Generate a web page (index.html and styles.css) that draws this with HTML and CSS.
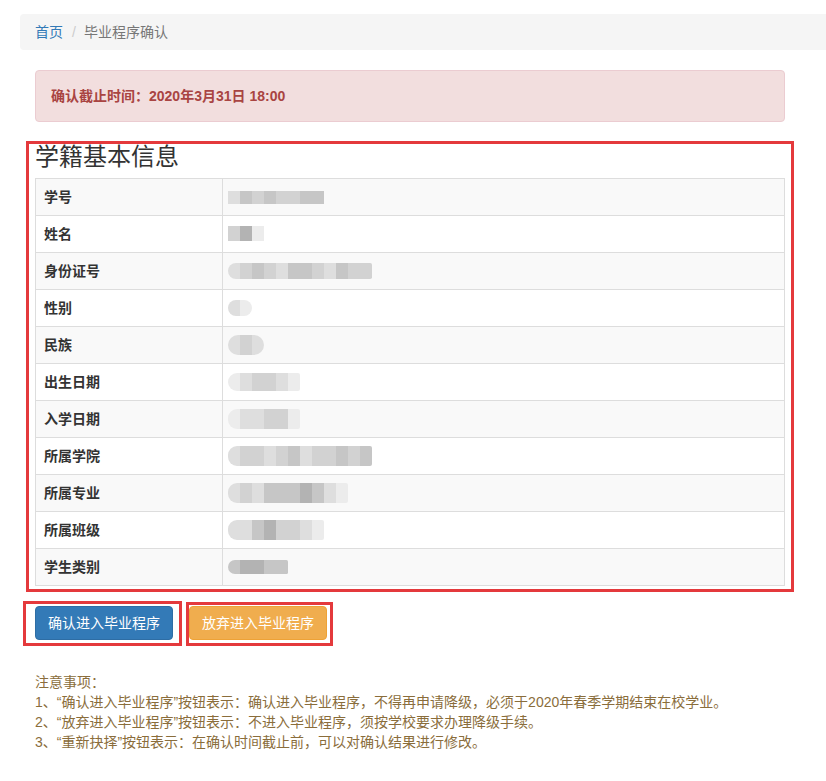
FILE: index.html
```html
<!DOCTYPE html>
<html lang="zh-CN">
<head>
  <meta charset="UTF-8">
  <meta name="viewport" content="width=device-width, initial-scale=1.0">
  <title>毕业程序确认</title>
  <link rel="stylesheet" href="styles.css">
</head>
<body>
  <ol class="breadcrumb">
    <li><a href="#">首页</a></li>
    <li class="active">毕业程序确认</li>
  </ol>

  <div class="main">
    <div class="alert">确认截止时间：2020年3月31日 18:00</div>

    <div class="mark">
      <h3>学籍基本信息</h3>
      <table class="info-table">
        <tbody>
          <tr>
            <th>学号</th>
            <td><span class="blur h13"><i class="g1"></i><i class="g3"></i><i class="g2"></i><i class="g3"></i><i class="g2"></i><i class="g2"></i><i class="g3"></i><i class="g3"></i></span></td>
          </tr>
          <tr>
            <th>姓名</th>
            <td><span class="blur h15"><i class="g2"></i><i class="g4"></i><i class="g0"></i></span></td>
          </tr>
          <tr>
            <th>身份证号</th>
            <td><span class="blur h16 round"><i class="g1"></i><i class="g2"></i><i class="g3"></i><i class="g2"></i><i class="g1"></i><i class="g3"></i><i class="g3"></i><i class="g2"></i><i class="g1"></i><i class="g3"></i><i class="g2"></i><i class="g2"></i></span></td>
          </tr>
          <tr>
            <th>性别</th>
            <td><span class="blur h16 blob"><i class="g1"></i><i class="g0"></i></span></td>
          </tr>
          <tr>
            <th>民族</th>
            <td><span class="blur h20 blob"><i class="g1"></i><i class="g2"></i><i class="g1"></i></span></td>
          </tr>
          <tr>
            <th>出生日期</th>
            <td><span class="blur h18 round"><i class="g0"></i><i class="g1"></i><i class="g2"></i><i class="g2"></i><i class="g1"></i><i class="g0"></i></span></td>
          </tr>
          <tr>
            <th>入学日期</th>
            <td><span class="blur h20 round"><i class="g0"></i><i class="g1"></i><i class="g1"></i><i class="g2"></i><i class="g2"></i><i class="g0"></i></span></td>
          </tr>
          <tr>
            <th>所属学院</th>
            <td><span class="blur h20 round"><i class="g1"></i><i class="g2"></i><i class="g2"></i><i class="g1"></i><i class="g2"></i><i class="g3"></i><i class="g1"></i><i class="g2"></i><i class="g2"></i><i class="g3"></i><i class="g2"></i><i class="g3"></i></span></td>
          </tr>
          <tr>
            <th>所属专业</th>
            <td><span class="blur h20 round"><i class="g1"></i><i class="g2"></i><i class="g1"></i><i class="g3"></i><i class="g3"></i><i class="g3"></i><i class="g4"></i><i class="g3"></i><i class="g1"></i><i class="g0"></i></span></td>
          </tr>
          <tr>
            <th>所属班级</th>
            <td><span class="blur h20 round"><i class="g1"></i><i class="g1"></i><i class="g3"></i><i class="g4"></i><i class="g2"></i><i class="g2"></i><i class="g1"></i><i class="g0"></i></span></td>
          </tr>
          <tr>
            <th>学生类别</th>
            <td><span class="blur h14 round"><i class="g3"></i><i class="g4"></i><i class="g4"></i><i class="g3"></i><i class="g3"></i></span></td>
          </tr>
        </tbody>
      </table>
    </div>

    <div class="actions">
      <div class="mark-btn mark-first">
        <button type="button" class="btn btn-primary">确认进入毕业程序</button>
      </div>
      <div class="mark-btn mark-second">
        <button type="button" class="btn btn-warning">放弃进入毕业程序</button>
      </div>
    </div>

    <div class="notes">
      <p>注意事项：</p>
      <p>1、“确认进入毕业程序”按钮表示：确认进入毕业程序，不得再申请降级，必须于2020年春季学期结束在校学业。</p>
      <p>2、“放弃进入毕业程序”按钮表示：不进入毕业程序，须按学校要求办理降级手续。</p>
      <p>3、“重新抉择”按钮表示：在确认时间截止前，可以对确认结果进行修改。</p>
    </div>
  </div>
</body>
</html>
```

FILE: styles.css
```css
body {
  margin: 0;
  font-family: "Liberation Sans", "Noto Sans CJK SC", sans-serif;
  font-size: 14px;
  line-height: 20px;
  color: #333;
  background-color: #fff;
  overflow-x: hidden;
}
.breadcrumb {
  list-style: none;
  margin: 14px 0 0 20px;
  padding: 8px 15px;
  background-color: #f5f5f5;
  border-radius: 4px 0 0 4px;
  display: flex;
}
.breadcrumb li.active {
  color: #777;
}
.breadcrumb li + li::before {
  content: "/";
  color: #ccc;
  padding: 0 8px 0 9px;
}
.breadcrumb a {
  color: #337ab7;
  text-decoration: none;
}
.main {
  width: 750px;
  margin-left: 35px;
  padding-top: 20px;
}
.alert {
  padding: 15px;
  background-color: #f2dede;
  border: 1px solid #ebccd1;
  border-radius: 4px;
  color: #a94442;
  font-weight: bold;
  margin-bottom: 19px;
}
.mark {
  margin: 0 -9px;
  border: 3px solid #e4393c;
  padding: 0 6px 3px;
}
.mark h3 {
  margin: 0 0 8px;
  font-size: 24px;
  line-height: 26px;
  font-weight: normal;
  color: #333;
}
.info-table {
  width: 100%;
  border-collapse: collapse;
  border: 1px solid #ddd;
}
.info-table th, .info-table td {
  padding: 8px;
  height: 20px;
  border: 1px solid #ddd;
  text-align: left;
  vertical-align: top;
}
.info-table th {
  width: 25%;
  font-weight: bold;
}
.info-table tr:nth-child(odd) {
  background-color: #f9f9f9;
}
.info-table td {
  line-height: 0;
}
/* blurred placeholder values */
.blur {
  display: inline-flex;
  vertical-align: top;
  overflow: hidden;
  margin-left: -3px;
  filter: blur(0.6px);
}
.blur i {
  display: block;
  width: 12px;
}
.blur.round {
  border-radius: 9px 2px 2px 9px;
}
.blur.blob {
  border-radius: 10px;
}
.h13 { margin-top: 4px; }
.h14 { margin-top: 3px; }
.h15 { margin-top: 2px; }
.h16 { margin-top: 2px; }
.h18 { margin-top: 1px; }
.h20 { margin-top: 0; }
.h13 i { height: 13px; }
.h14 i { height: 14px; }
.h15 i { height: 15px; }
.h16 i { height: 16px; }
.h18 i { height: 18px; }
.h20 i { height: 20px; }
.g0 { background-color: #ececec; }
.g1 { background-color: #dedede; }
.g2 { background-color: #d2d2d2; }
.g3 { background-color: #c6c6c6; }
.g4 { background-color: #b3b3b3; }
.actions {
  display: flex;
  margin-top: 9px;
}
.mark-btn {
  border: 3px solid #e4393c;
}
.mark-first {
  margin-left: -12px;
  padding: 2px 6px 3px 9px;
}
.mark-second {
  margin-left: 4px;
  margin-top: 1px;
  padding: 1px 3px 3px 0;
}
.btn {
  display: block;
  padding: 6px 12px;
  font-family: inherit;
  font-size: 14px;
  line-height: 20px;
  border: 1px solid transparent;
  border-radius: 4px;
  color: #fff;
  cursor: pointer;
}
.btn-primary {
  background-color: #337ab7;
  border-color: #2e6da4;
}
.btn-warning {
  background-color: #f0ad4e;
  border-color: #eea236;
}
.notes {
  margin-top: 26px;
  color: #8a6d3b;
}
.notes p {
  margin: 0;
}
```
